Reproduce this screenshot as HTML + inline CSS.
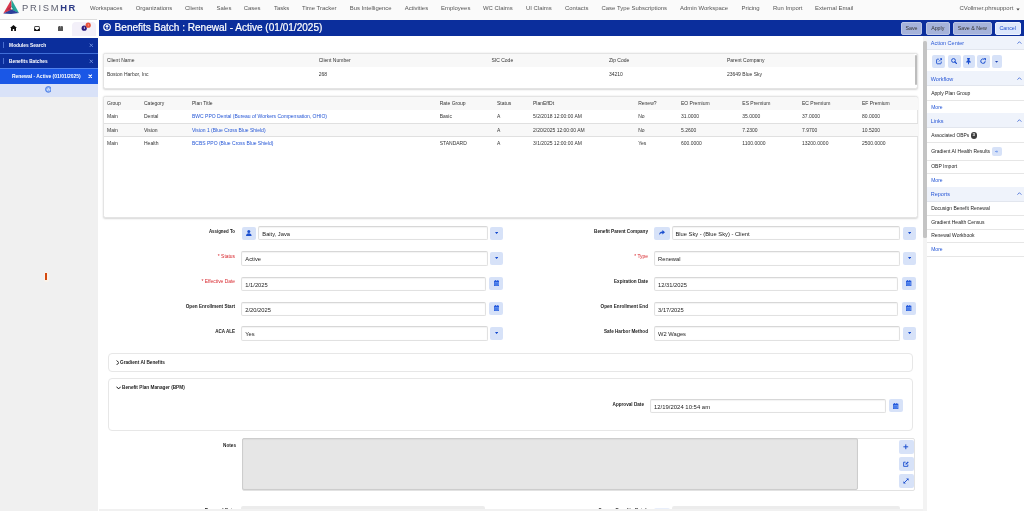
<!DOCTYPE html>
<html><head><meta charset="utf-8"><title>Benefits Batch</title>
<style>
*{box-sizing:border-box;margin:0;padding:0}
html,body{width:1024px;height:511px;overflow:hidden;background:#fff}
body{font-family:"Liberation Sans",sans-serif;color:#333;position:relative;font-size:5px}
.a{position:absolute;white-space:nowrap}
.nav{position:absolute;left:-12px;top:-12px;width:1048px;height:32px;background:#fafafa}
.nav span{position:absolute;margin-left:12px;top:16.9px;font-size:5.95px;line-height:7px;color:#555;white-space:nowrap}
.t{position:absolute;white-space:nowrap;font-size:5px;line-height:6px;color:#333}
.b{font-weight:700}
.lnk,.pi.lnk,.t.lnk{color:#2456d6}
.card{position:absolute;background:#fff;border:0.6px solid #e4e4e4;border-radius:2.5px;box-shadow:0 0.6px 1.8px rgba(0,0,0,.16)}
.lbl{position:absolute;white-space:nowrap;font-size:4.65px;line-height:6px;font-weight:700;color:#222;text-align:right}
.req{color:#d8262c;font-weight:400;font-size:4.9px;margin-top:0.3px}
.inp{position:absolute;height:14.2px;margin-top:-0.3px;border:0.7px solid #e1e1e1;border-top-color:#d7d7d7;border-radius:2px;background:#fff;box-shadow:inset 0 0.6px 1px rgba(0,0,0,.09);font-size:5.76px;line-height:14.2px;padding-left:3px;color:#222;white-space:nowrap}
.btn{position:absolute;height:13.2px;border-radius:2px;background:#d7e2f8}
.btn svg{position:absolute;left:50%;top:50%}
.ph{position:absolute;left:927.4px;width:110px;background:#eff3fb;color:#2857d6;font-size:5.5px;line-height:7px;border-bottom:0.6px solid #e2e6ee}
.ph span{position:absolute;left:3.4px}
.pi{position:absolute;left:931.2px;font-size:5px;line-height:6px;white-space:nowrap;color:#222}
.sep{position:absolute;left:927.4px;width:110px;height:0.6px;background:#e6e6e6}
</style></head><body><div id="wrap" style="position:absolute;left:-12px;top:-12px;width:1048px;height:535px;overflow:hidden;background:#fff;filter:blur(0.35px)"><div style="position:absolute;left:12px;top:12px;width:1024px;height:523px">

<!-- top nav -->
<div class="nav">
<span style="left:90px">Workspaces</span>
<span style="left:135.7px">Organizations</span>
<span style="left:185px">Clients</span>
<span style="left:216.5px">Sales</span>
<span style="left:243.7px">Cases</span>
<span style="left:274px">Tasks</span>
<span style="left:302px">Time Tracker</span>
<span style="left:349.7px">Bus Intelligence</span>
<span style="left:404.7px">Activities</span>
<span style="left:441px">Employees</span>
<span style="left:483px">WC Claims</span>
<span style="left:526px">UI Claims</span>
<span style="left:565px">Contacts</span>
<span style="left:601.5px">Case Type Subscriptions</span>
<span style="left:680px">Admin Workspace</span>
<span style="left:741.5px">Pricing</span>
<span style="left:773px">Run Import</span>
<span style="left:815px">External Email</span>
<span style="left:959.5px">CVollmer.phrsupport</span>
</div>
<svg class="a" style="left:1016px;top:7.6px" width="4" height="3" viewBox="0 0 4 3"><path d="M0.3 0.5h3.4L2 2.6z" fill="#444"/></svg>

<!-- logo -->
<svg class="a" style="left:0;top:0" width="84" height="18" viewBox="0 0 84 18">
<polygon points="11.5,-0.6 3.3,13.5 11.6,10" fill="#d8364a"/>
<polygon points="11.5,-0.6 19,13.1 11.6,10" fill="#27a79a"/>
<polygon points="3.3,13.5 11.6,9.6 19,13.100 11,14" fill="#2b3f9a"/>
<polygon points="6.500,9.600 11.200,6.200 12,9.800" fill="#b32544" opacity=".9"/>
<polygon points="11.600,5.600 14.800,9.900 12.300,9.500" fill="#1e8f86" opacity=".8"/>
<polygon points="11.300,7 12.900,8.900 11.500,9.600 10.600,8.700" fill="#fff" opacity=".9"/>
<text x="22" y="10.7" font-family="Liberation Sans, sans-serif" font-size="9.4" fill="#5d5f6e" letter-spacing="1.7">PRISM</text>
<text x="60.3" y="10.7" font-family="Liberation Sans, sans-serif" font-size="9.4" font-weight="700" fill="#2c3a86" letter-spacing="1.4">HR</text>
</svg>

<!-- sidebar -->
<div class="a" style="left:-12px;top:20px;width:110px;height:510px;background:#f0f0f0"></div>
<div class="a" style="left:-12px;top:20.3px;width:110px;height:17.4px;background:#fff"></div>
<div class="a" style="left:72px;top:22px;width:24.3px;height:14.2px;background:#f3f0f9;border-radius:4px 4px 0 0"></div>
<div class="a" style="left:-12px;top:19px;width:109px;height:0.9px;background:#dcdcdc"></div>
<!-- tab icons -->
<svg class="a" style="left:9.5px;top:25px" width="7" height="6" viewBox="0 0 7 6"><path d="M3.5 0L0 3h1v3h1.8V4h1.4v2H6V3h1z" fill="#111"/></svg>
<svg class="a" style="left:33.5px;top:25.5px" width="6" height="5.5" viewBox="0 0 6 5.5"><path d="M0.6 0.3h4.8l0.5 2.8v1.7c0 .3-.2.5-.5.5H0.6c-.3 0-.5-.2-.5-.5V3.1zM1.1 1v2.1h1c0 .6.4 1 .9 1s.9-.4.9-1h1V1z" fill="#111" fill-rule="evenodd"/></svg>
<svg class="a" style="left:57.8px;top:26px" width="5.4" height="4.9" viewBox="0 0 5.4 4.9"><path d="M0 .5h1V0h1.200v.5h1V0h1.200v.5h1v4.400H0z" fill="#555"/><rect x="2.500" y=".6" width=".4" height="1.800" fill="#aaa"/></svg>
<svg class="a" style="left:81px;top:22px" width="11" height="10" viewBox="0 0 11 10"><circle cx="3.2" cy="6.2" r="2.6" fill="#2a1a7e"/><rect x="2.9" y="4.8" width=".7" height="2.2" fill="#fff"/><circle cx="7.2" cy="3.2" r="2.6" fill="#e8523c"/><rect x="6.9" y="2" width=".6" height="2.2" fill="#ffb3a6"/></svg>

<div class="a" style="left:-12px;top:37.7px;width:110px;height:15px;background:#0b2e9c"></div>
<div class="a" style="left:-12px;top:52.7px;width:110px;height:1.5px;background:#3f6ed8"></div>
<div class="a" style="left:-12px;top:54.2px;width:110px;height:13.6px;background:#0b2e9c"></div>
<div class="a" style="left:-12px;top:67.9px;width:110px;height:1.3px;background:#5283ec"></div>
<div class="a" style="left:-12px;top:69px;width:110px;height:14.6px;background:#1a57e6"></div>
<div class="a" style="left:-12px;top:83.5px;width:110px;height:13.9px;background:#d9e2f8"></div>
<div class="a" style="left:3.4px;top:42.3px;width:0.6px;height:6px;background:#4a6fd0"></div>
<div class="a" style="left:3.4px;top:58px;width:0.6px;height:6px;background:#4a6fd0"></div>
<div class="t b" style="left:9.1px;top:43.2px;font-size:4.85px;color:#fff">Modules Search</div>
<div class="t b" style="left:9.1px;top:58.8px;font-size:4.75px;color:#fff">Benefits Batches</div>
<div class="t b" style="left:11.9px;top:73.3px;font-size:4.99px;color:#fff">Renewal - Active (01/01/2025)</div>
<svg class="a" style="left:88.6px;top:43px" width="4.6" height="4.6" viewBox="0 0 4.6 4.6"><path d="M0.7 0.7L3.9 3.9M3.9 0.7L0.7 3.9" stroke="#7a98e4" stroke-width=".85"/></svg>
<svg class="a" style="left:88.6px;top:58.6px" width="4.6" height="4.6" viewBox="0 0 4.6 4.6"><path d="M0.7 0.7L3.9 3.9M3.9 0.7L0.7 3.9" stroke="#7a98e4" stroke-width=".85"/></svg>
<svg class="a" style="left:87.9px;top:73.9px" width="4.6" height="4.6" viewBox="0 0 4.6 4.6"><path d="M0.6 0.6L4 4M4 0.6L0.6 4" stroke="#fff" stroke-width="1.05"/></svg>
<svg class="a" style="left:44.7px;top:85.8px" width="6.8" height="6.8" viewBox="0 0 6.4 6.4"><circle cx="3.2" cy="3.2" r="2.7" fill="#8fb2f2" stroke="#3f74e6" stroke-width=".8"/><path d="M1.9 3.6L3.2 2.3L4.5 3.6" stroke="#fff" stroke-width=".6" fill="none"/><path d="M1.9 4.6L3.2 3.4L4.5 4.6" stroke="#fff" stroke-width=".5" fill="none"/></svg>
<!-- orange marker -->
<div class="a" style="left:43.6px;top:271.6px;width:5px;height:10px;border-radius:2.5px;background:#fbf3ea"></div>
<div class="a" style="left:45px;top:272.8px;width:2.2px;height:7.4px;background:#d4480f"></div>

<!-- title bar -->
<div class="a" style="left:98.5px;top:19.8px;width:940px;height:16px;background:#0b2e9c"></div>
<svg class="a" style="left:102.8px;top:23.2px" width="8.1" height="8.1" viewBox="0 0 7.6 7.6"><circle cx="3.8" cy="3.8" r="3.1" fill="none" stroke="#fff" stroke-width="1.1"/><path d="M3.8 5.700V2.300M2.500 3.500L3.800 2.200L5.100 3.500" stroke="#fff" stroke-width=".95" fill="none"/></svg>
<div class="t" style="left:114.6px;top:22.45px;font-size:10.06px;line-height:12px;color:#fff;-webkit-text-stroke:0.2px #fff">Benefits Batch : Renewal - Active (01/01/2025)</div>
<div class="a" style="left:901px;top:21.6px;width:21px;height:13.4px;background:#a6b3da;border:0.6px solid #bcc7e6;border-radius:2px;font-size:5.3px;line-height:11px;text-align:center;color:#333">Save</div>
<div class="a" style="left:925.5px;top:21.6px;width:24.5px;height:13.4px;background:#a6b3da;border:0.6px solid #bcc7e6;border-radius:2px;font-size:5.3px;line-height:11px;text-align:center;color:#333">Apply</div>
<div class="a" style="left:953px;top:21.6px;width:38.6px;height:13.4px;background:#a6b3da;border:0.6px solid #bcc7e6;border-radius:2px;font-size:5.3px;line-height:11px;text-align:center;color:#333">Save &amp; New</div>
<div class="a" style="left:994.7px;top:21.6px;width:26px;height:13.4px;background:#dce7fc;border:0.6px solid #eef3fe;border-radius:2px;font-size:5.3px;line-height:11px;text-align:center;color:#1d4fd0">Cancel</div>

<!-- card 1 -->
<div class="card" style="left:103px;top:53.4px;width:815px;height:36px"></div>
<div class="a" style="left:103.6px;top:54px;width:811.4px;height:13px;background:#f8f8f8;border-radius:2px 2px 0 0"></div>
<div class="a" style="left:915.2px;top:54.8px;width:2.3px;height:30px;background:#bdbdbd;border-radius:1px"></div>
<div class="t" style="left:107px;top:57.3px">Client Name</div>
<div class="t" style="left:318.7px;top:57.3px">Client Number</div>
<div class="t" style="left:491.5px;top:57.3px">SIC Code</div>
<div class="t" style="left:609px;top:57.3px">Zip Code</div>
<div class="t" style="left:727px;top:57.3px">Parent Company</div>
<div class="t" style="left:107px;top:70.8px">Boston Harbor, Inc</div>
<div class="t" style="left:318.7px;top:70.8px">268</div>
<div class="t" style="left:609px;top:70.8px">34210</div>
<div class="t" style="left:727px;top:70.8px">23649 Blue Sky</div>

<!-- card 2 table -->
<div class="card" style="left:103px;top:96.2px;width:815.4px;height:121.4px"></div>
<div class="a" style="left:103.6px;top:96.8px;width:814.2px;height:13.2px;background:#f8f8f8;border-radius:2px 2px 0 0"></div>
<div class="a" style="left:103.6px;top:123.2px;width:814.2px;height:13.4px;background:#f8f8f8;border-top:0.6px solid #e0e0e0;border-bottom:0.6px solid #e0e0e0"></div>
<div class="t" style="left:107px;top:100px">Group</div>
<div class="t" style="left:144px;top:100px">Category</div>
<div class="t" style="left:192px;top:100px">Plan Title</div>
<div class="t" style="left:439.7px;top:100px">Rate Group</div>
<div class="t" style="left:497px;top:100px">Status</div>
<div class="t" style="left:533px;top:100px">PlanEffDt</div>
<div class="t" style="left:638.2px;top:100px">Renew?</div>
<div class="t" style="left:681px;top:100px">EO Premium</div>
<div class="t" style="left:742.3px;top:100px">ES Premium</div>
<div class="t" style="left:802px;top:100px">EC Premium</div>
<div class="t" style="left:862px;top:100px">EF Premium</div>

<div class="t" style="left:107px;top:113.3px">Main</div>
<div class="t" style="left:144px;top:113.3px">Dental</div>
<div class="t lnk" style="left:192px;top:113.3px">BWC PPO Dental (Bureau of Workers Compensation, OHIO)</div>
<div class="t" style="left:439.7px;top:113.3px">Basic</div>
<div class="t" style="left:497px;top:113.3px">A</div>
<div class="t" style="left:533px;top:113.3px">5/2/2018 12:00:00 AM</div>
<div class="t" style="left:638.2px;top:113.3px">No</div>
<div class="t" style="left:681px;top:113.3px">31.0000</div>
<div class="t" style="left:742.3px;top:113.3px">35.0000</div>
<div class="t" style="left:802px;top:113.3px">37.0000</div>
<div class="t" style="left:862px;top:113.3px">80.0000</div>

<div class="t" style="left:107px;top:126.7px">Main</div>
<div class="t" style="left:144px;top:126.7px">Vision</div>
<div class="t lnk" style="left:192px;top:126.7px">Vision 1 (Blue Cross Blue Shield)</div>
<div class="t" style="left:497px;top:126.7px">A</div>
<div class="t" style="left:533px;top:126.7px">2/20/2025 12:00:00 AM</div>
<div class="t" style="left:638.2px;top:126.7px">No</div>
<div class="t" style="left:681px;top:126.7px">5.2600</div>
<div class="t" style="left:742.3px;top:126.7px">7.2300</div>
<div class="t" style="left:802px;top:126.7px">7.9700</div>
<div class="t" style="left:862px;top:126.7px">10.5200</div>

<div class="t" style="left:107px;top:139.9px">Main</div>
<div class="t" style="left:144px;top:139.9px">Health</div>
<div class="t lnk" style="left:192px;top:139.9px">BCBS PPO (Blue Cross Blue Shield)</div>
<div class="t" style="left:439.7px;top:139.9px">STANDARD</div>
<div class="t" style="left:497px;top:139.9px">A</div>
<div class="t" style="left:533px;top:139.9px">3/1/2025 12:00:00 AM</div>
<div class="t" style="left:638.2px;top:139.9px">Yes</div>
<div class="t" style="left:681px;top:139.9px">600.0000</div>
<div class="t" style="left:742.3px;top:139.9px">1100.0000</div>
<div class="t" style="left:802px;top:139.9px">13200.0000</div>
<div class="t" style="left:862px;top:139.9px">2500.0000</div>

<!-- form left -->
<div class="lbl" style="left:135px;width:100px;top:228.6px;font-size:4.42px">Assigned To</div>
<div class="lbl req" style="left:135px;width:100px;top:253.6px">* Status</div>
<div class="lbl req" style="left:135px;width:100px;top:278.6px">* Effective Date</div>
<div class="lbl" style="left:135px;width:100px;top:303.7px">Open Enrollment Start</div>
<div class="lbl" style="left:135px;width:100px;top:328.6px;font-size:4.55px">ACA ALE</div>

<div class="btn" style="left:242.2px;top:226.6px;width:14px"><svg style="margin:-3.1px 0 0 -2.8px" width="5.6" height="6" viewBox="0 0 4.6 5"><circle cx="2.3" cy="1.3" r="1.25" fill="#1b4fcf"/><path d="M0 5c0-1.5.9-2.2 2.3-2.2S4.6 3.500 4.600 5z" fill="#1b4fcf"/></svg></div>
<div class="inp" style="left:258.3px;top:226.6px;width:229.4px">Baity, Java</div>
<div class="btn" style="left:489.8px;top:226.6px;width:13.2px"><svg style="margin:-1px 0 0 -1.6px" width="3.2" height="2.2" viewBox="0 0 3.2 2.2"><path d="M0 0h3.200L1.600 2.200z" fill="#1b4fcf"/></svg></div>

<div class="inp" style="left:241.3px;top:251.7px;width:246.4px">Active</div>
<div class="btn" style="left:489.8px;top:251.700px;width:13.2px"><svg style="margin:-1px 0 0 -1.6px" width="3.2" height="2.2" viewBox="0 0 3.2 2.2"><path d="M0 0h3.200L1.600 2.200z" fill="#1b4fcf"/></svg></div>

<div class="inp" style="left:241.3px;top:276.8px;width:244.8px">1/1/2025</div>
<div class="btn cal" style="left:489.4px;top:276.8px;width:13.6px"><svg style="margin:-3.1px 0 0 -2.7px" width="5.4" height="6.1" viewBox="0 0 4.2 4.8"><path d="M0.9 0h.7v.6h1V0h.7v.6h.9v4.200H0V.6h.9zM.6 1.800v2.400h3V1.800z" fill="#2459dc"/><rect x=".6" y="1.800" width="3" height="2.400" fill="#2f6be8" opacity=".85"/></svg></div>

<div class="inp" style="left:241.3px;top:301.800px;width:244.8px">2/20/2025</div>
<div class="btn cal" style="left:489.4px;top:301.800px;width:13.6px"><svg style="margin:-3.1px 0 0 -2.7px" width="5.4" height="6.1" viewBox="0 0 4.2 4.8"><path d="M0.9 0h.7v.6h1V0h.7v.6h.9v4.200H0V.6h.9zM.6 1.800v2.400h3V1.800z" fill="#2459dc"/><rect x=".6" y="1.800" width="3" height="2.400" fill="#2f6be8" opacity=".85"/></svg></div>

<div class="inp" style="left:241.3px;top:326.7px;width:246.4px">Yes</div>
<div class="btn" style="left:489.8px;top:326.7px;width:13.2px"><svg style="margin:-1px 0 0 -1.6px" width="3.2" height="2.2" viewBox="0 0 3.2 2.2"><path d="M0 0h3.200L1.600 2.200z" fill="#1b4fcf"/></svg></div>

<!-- form right -->
<div class="lbl" style="left:548px;width:100px;top:228.6px">Benefit Parent Company</div>
<div class="lbl req" style="left:548px;width:100px;top:253.6px">* Type</div>
<div class="lbl" style="left:548px;width:100px;top:279.1px">Expiration Date</div>
<div class="lbl" style="left:548px;width:100px;top:303.7px">Open Enrollment End</div>
<div class="lbl" style="left:548px;width:100px;top:328.6px">Safe Harbor Method</div>

<div class="btn" style="left:654.4px;top:226.6px;width:15.4px"><svg style="margin:-2.9px 0 0 -3px" width="6" height="5.4" viewBox="0 0 6 5.4"><path d="M3.400 0L6 2.300L3.400 4.600V3.300C1.900 3.200.9 3.700.1 5.300C.1 2.900 1.200 1.500 3.400 1.400z" fill="#1b4fcf"/></svg></div>
<div class="inp" style="left:671.5px;top:226.6px;width:228.5px">Blue Sky - (Blue Sky) - Client</div>
<div class="btn" style="left:902.5px;top:226.6px;width:13.7px"><svg style="margin:-1px 0 0 -1.6px" width="3.2" height="2.2" viewBox="0 0 3.2 2.2"><path d="M0 0h3.200L1.600 2.200z" fill="#1b4fcf"/></svg></div>

<div class="inp" style="left:654.1px;top:251.7px;width:246px">Renewal</div>
<div class="btn" style="left:902.5px;top:251.7px;width:13.7px"><svg style="margin:-1px 0 0 -1.6px" width="3.2" height="2.2" viewBox="0 0 3.2 2.2"><path d="M0 0h3.200L1.600 2.200z" fill="#1b4fcf"/></svg></div>

<div class="inp" style="left:654.1px;top:276.8px;width:244.3px">12/31/2025</div>
<div class="btn cal" style="left:901.7px;top:276.8px;width:14.5px"><svg style="margin:-3.1px 0 0 -2.7px" width="5.4" height="6.1" viewBox="0 0 4.2 4.8"><path d="M0.9 0h.7v.6h1V0h.7v.6h.9v4.200H0V.6h.9zM.6 1.800v2.400h3V1.800z" fill="#2459dc"/><rect x=".6" y="1.800" width="3" height="2.400" fill="#2f6be8" opacity=".85"/></svg></div>

<div class="inp" style="left:654.1px;top:301.800px;width:244.3px">3/17/2025</div>
<div class="btn cal" style="left:901.7px;top:301.800px;width:14.5px"><svg style="margin:-3.1px 0 0 -2.7px" width="5.4" height="6.1" viewBox="0 0 4.2 4.8"><path d="M0.9 0h.7v.6h1V0h.7v.6h.9v4.200H0V.6h.9zM.6 1.800v2.400h3V1.800z" fill="#2459dc"/><rect x=".6" y="1.800" width="3" height="2.400" fill="#2f6be8" opacity=".85"/></svg></div>

<div class="inp" style="left:654.1px;top:326.7px;width:246px">W2 Wages</div>
<div class="btn" style="left:902.5px;top:326.7px;width:13.7px"><svg style="margin:-1px 0 0 -1.6px" width="3.2" height="2.2" viewBox="0 0 3.2 2.2"><path d="M0 0h3.200L1.600 2.200z" fill="#1b4fcf"/></svg></div>

<!-- collapsible panels -->
<div class="a" style="left:108.4px;top:353.3px;width:804.2px;height:18.8px;border:0.6px solid #e7e7e7;border-radius:4px;background:#fff"></div>
<svg class="a" style="left:115.6px;top:360px" width="3.6" height="5.4" viewBox="0 0 3.6 5.4"><path d="M0.7 0.5L2.9 2.700L0.7 4.900" stroke="#111" stroke-width="1" fill="none"/></svg>
<div class="lbl" style="left:120px;top:360.3px;text-align:left;font-size:4.7px">Gradient AI Benefits</div>
<div class="a" style="left:108.4px;top:378px;width:804.2px;height:53px;border:0.6px solid #e7e7e7;border-radius:4px;background:#fff"></div>
<svg class="a" style="left:115.8px;top:386px" width="5.200" height="3.6" viewBox="0 0 5.2 3.6"><path d="M0.5 0.7L2.600 2.900L4.700 0.7" stroke="#111" stroke-width="1" fill="none"/></svg>
<div class="lbl" style="left:122px;top:385.1px;text-align:left;font-size:4.72px">Benefit Plan Manager (BPM)</div>
<div class="lbl" style="left:544px;width:100px;top:402.100px">Approval Date</div>
<div class="inp" style="left:650px;top:399.2px;width:236px;font-size:5.9px;letter-spacing:0.02px">12/19/2024 10:54 am</div>
<div class="btn cal" style="left:889px;top:399.2px;width:14px"><svg style="margin:-3.1px 0 0 -2.7px" width="5.4" height="6.1" viewBox="0 0 4.2 4.8"><path d="M0.9 0h.7v.6h1V0h.7v.6h.9v4.200H0V.6h.9zM.6 1.800v2.400h3V1.800z" fill="#2459dc"/><rect x=".6" y="1.800" width="3" height="2.400" fill="#2f6be8" opacity=".85"/></svg></div>

<!-- notes -->
<div class="lbl" style="left:136px;width:100px;top:442.800px">Notes</div>
<div class="a" style="left:242.2px;top:437.9px;width:673.2px;height:53px;border:0.6px solid #e2e2e2;border-radius:2px;background:#fff"></div>
<div class="a" style="left:242.2px;top:437.9px;width:616px;height:52.6px;background:#e6e6e6;border:0.7px solid #cdcdcd;border-radius:2px;box-shadow:inset 0 0.6px 1px rgba(0,0,0,.08)"></div>
<div class="btn" style="left:898.5px;top:440.1px;width:15px;height:14.2px"><svg style="margin:-2.8px 0 0 -2.8px" width="5.6" height="5.6" viewBox="0 0 4.2 4.2"><path d="M2.100 .3v3.600M.3 2.100h3.600" stroke="#1b4fcf" stroke-width=".75"/></svg></div>
<div class="btn" style="left:898.5px;top:457.2px;width:15px;height:14px"><svg style="margin:-3px 0 0 -3px" width="6" height="6" viewBox="0 0 4.6 4.6"><path d="M2 .9H.5v3.200h3.200V2.600" stroke="#1b4fcf" stroke-width=".7" fill="none"/><path d="M1.900 2.800L2 2L3.700 .3L4.400 1L2.700 2.700z" fill="#1b4fcf"/></svg></div>
<div class="btn" style="left:898.5px;top:473.9px;width:15px;height:14.2px"><svg style="margin:-3px 0 0 -3px" width="6" height="6" viewBox="0 0 4.4 4.4"><path d="M.7 3.700L3.700 .7" stroke="#1b4fcf" stroke-width=".7"/><path d="M2.300 .3H4.100V2.100zM.3 2.300V4.100H2.100z" fill="#1b4fcf"/></svg></div>

<!-- bottom partial row -->
<div class="lbl" style="left:135px;width:100px;top:508px">Renewal Date</div>
<div class="lbl" style="left:548px;width:100px;top:508px">Source Benefits Batch</div>
<div class="a" style="left:241.3px;top:506.2px;width:244px;height:16px;background:#ececec;border-radius:2px"></div>
<div class="a" style="left:671.5px;top:506.2px;width:228.5px;height:16px;background:#ececec;border-radius:2px"></div>
<div class="a" style="left:654.4px;top:507.6px;width:15.4px;height:14px;background:#e9effb;border-radius:2px"></div>
<div class="a" style="left:98.5px;top:508.6px;width:824.5px;height:14px;background:#f1f1f1"></div>

<!-- right panel -->
<div class="a" style="left:923px;top:36px;width:4.4px;height:495px;background:#f3f3f3"></div>
<div class="a" style="left:923.3px;top:40.5px;width:3.3px;height:197.700px;background:#c4c4c4;border-radius:1.5px"></div>
<div class="ph" style="top:36px;height:14.4px"><span style="top:4px">Action Center</span></div>
<div class="ph" style="top:71px;height:15.2px"><span style="top:4.7px">Workflow</span></div>
<div class="ph" style="top:113.4px;height:14.7px"><span style="top:4.3px">Links</span></div>
<div class="ph" style="top:187.2px;height:14.4px"><span style="top:3.9px">Reports</span></div>
<svg class="a" style="left:1016.8px;top:41px" width="4.8" height="3.2" viewBox="0 0 4.8 3.2"><path d="M.4 2.7L2.4 .7L4.4 2.7" stroke="#1f4fd0" stroke-width=".7" fill="none"/></svg>
<svg class="a" style="left:1016.8px;top:77.4px" width="4.8" height="3.2" viewBox="0 0 4.8 3.2"><path d="M.4 2.7L2.4 .7L4.4 2.7" stroke="#1f4fd0" stroke-width=".7" fill="none"/></svg>
<svg class="a" style="left:1016.8px;top:119px" width="4.8" height="3.2" viewBox="0 0 4.8 3.2"><path d="M.4 2.7L2.4 .7L4.4 2.7" stroke="#1f4fd0" stroke-width=".7" fill="none"/></svg>
<svg class="a" style="left:1016.8px;top:192.4px" width="4.8" height="3.2" viewBox="0 0 4.8 3.2"><path d="M.4 2.7L2.4 .7L4.4 2.7" stroke="#1f4fd0" stroke-width=".7" fill="none"/></svg>

<div class="btn" style="left:932.2px;top:55.3px;width:13.3px;height:12.3px"><svg style="margin:-3.3px 0 0 -3.2px" width="6.4" height="6.4" viewBox="0 0 6.4 6.4"><path d="M2.9 1.2H1.3c-.4 0-.7.3-.7.7v3.200c0 .4.3.7.7.7h3.200c.4 0 .7-.3.7-.7V3.500" stroke="#1b4fcf" stroke-width=".9" fill="none"/><path d="M2.900 3.500L5.600 .8" stroke="#1b4fcf" stroke-width=".9"/><path d="M3.800 .3H6.100V2.600z" fill="#1b4fcf"/></svg></div>
<div class="btn" style="left:947.5px;top:55.3px;width:13px;height:12.3px"><svg style="margin:-3.2px 0 0 -3px" width="6" height="6" viewBox="0 0 6 6"><circle cx="2.500" cy="2.500" r="1.900" stroke="#1b4fcf" stroke-width="1" fill="none"/><path d="M3.900 3.900L5.500 5.500" stroke="#1b4fcf" stroke-width="1.100" stroke-linecap="round"/></svg></div>
<div class="btn" style="left:962.5px;top:55.3px;width:12px;height:12.3px"><svg style="margin:-3.300px 0 0 -2.500px" width="5" height="6.6" viewBox="0 0 5 6.6"><path d="M1 0h3v.7h-.5v2c.8.300 1.400.9 1.400 1.800H3v1.500L2.500 6.600L2 6V4.500H.1c0-.9.6-1.500 1.400-1.800V.7H1z" fill="#1b4fcf"/></svg></div>
<div class="btn" style="left:976.5px;top:55.3px;width:13px;height:12.3px"><svg style="margin:-3px 0 0 -3.200px" width="6.4" height="6" viewBox="0 0 6.4 6"><path d="M5.200 3.200A2.200 2.200 0 1 1 4.300 1.400" stroke="#1b4fcf" stroke-width="1" fill="none"/><path d="M3.600 .1L6.200 .2L5.900 2.800z" fill="#1b4fcf"/></svg></div>
<div class="btn" style="left:991.8px;top:55.3px;width:10.5px;height:12.3px"><svg style="margin:-.5px 0 0 -1.600px" width="3.200" height="1.800" viewBox="0 0 3.2 1.8"><path d="M0 0h3.200L1.600 1.800z" fill="#1b3fb0"/></svg></div>

<div class="pi" style="top:90.3px">Apply Plan Group</div>
<div class="sep" style="top:100px"></div>
<div class="pi lnk" style="top:103.600px">More</div>
<div class="pi" style="top:132.500px;font-size:4.88px">Associated OBPs</div>
<div class="a" style="left:970.5px;top:132.3px;width:6.6px;height:6.6px;border-radius:50%;background:#3c3c3c;color:#fff;font-size:4.4px;line-height:6.6px;text-align:center;font-weight:700">3</div>
<div class="sep" style="top:142.1px"></div>
<div class="pi" style="top:148.100px">Gradient AI Health Results</div>
<div class="btn" style="left:992px;top:146.700px;width:9.8px;height:9.3px"><svg style="margin:-1.600px 0 0 -1.600px" width="3.200" height="3.200" viewBox="0 0 3.2 3.2"><path d="M1.600 0L3.200 1.600L1.600 3.200V2.100H0V1.100h1.600z" fill="#7fa3ee"/></svg></div>
<div class="sep" style="top:160px"></div>
<div class="pi" style="top:163px">OBP Import</div>
<div class="sep" style="top:173px"></div>
<div class="pi lnk" style="top:177px">More</div>
<div class="pi" style="top:205px">Docusign Benefit Renewal</div>
<div class="sep" style="top:215px"></div>
<div class="pi" style="top:219px">Gradient Health Census</div>
<div class="sep" style="top:228.600px"></div>
<div class="pi" style="top:232.300px">Renewal Workbook</div>
<div class="sep" style="top:242.300px"></div>
<div class="pi lnk" style="top:246px">More</div>
<div class="sep" style="top:255.500px"></div>

</div></div></body></html>
